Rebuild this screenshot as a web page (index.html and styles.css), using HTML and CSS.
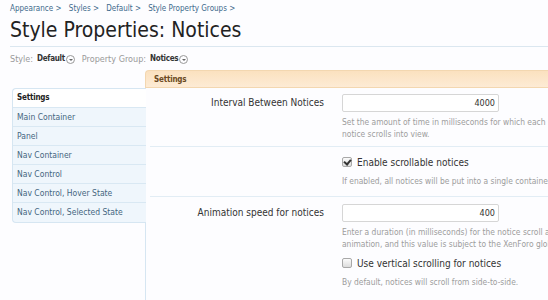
FILE: index.html
```html
<!DOCTYPE html>
<html lang="en">
<head>
  <meta charset="UTF-8">
  <title>Style Properties: Notices</title>
  <link rel="stylesheet" href="styles.css">
</head>
<body>

  <div class="page">
    <div class="breadcrumb">
      <a href="#">Appearance &gt;</a>
      <a href="#">Styles &gt;</a>
      <a href="#">Default &gt;</a>
      <a href="#">Style Property Groups &gt;</a>
    </div>

    <h1>Style Properties: Notices</h1>

    <div class="chooser">
      <span class="label">Style:</span> <b>Default</b><span class="drop"></span>
      <span class="label gap">Property Group:</span> <b>Notices</b><span class="drop"></span>
    </div>

    <div class="tabs">
      <div class="tab">Settings</div>
    </div>

    <div class="editor">
      <!-- Group list -->
      <ul class="groups">
        <li class="active">Settings</li>
        <li>Main Container</li>
        <li>Panel</li>
        <li>Nav Container</li>
        <li>Nav Control</li>
        <li>Nav Control, Hover State</li>
        <li>Nav Control, Selected State</li>
      </ul>

      <!-- Properties -->
      <div class="props">
        <div class="row">
          <label class="name">Interval Between Notices</label>
          <div class="ctrl">
            <input type="text" class="num" value="4000">
            <p class="hint">Set the amount of time in milliseconds for which each<br>notice scrolls into view.</p>
          </div>
        </div>

        <div class="row toggle">
          <div class="name"></div>
          <div class="ctrl">
            <label class="check"><input type="checkbox" checked> Enable scrollable notices</label>
            <p class="hint">If enabled, all notices will be put into a single container and scrolled.</p>
          </div>
        </div>

        <div class="row">
          <label class="name">Animation speed for notices</label>
          <div class="ctrl">
            <input type="text" class="num" value="400">
            <p class="hint">Enter a duration (in milliseconds) for the notice scroll and fade<br>animation, and this value is subject to the XenForo global speed multiplier.</p>
            <label class="check second"><input type="checkbox"> Use vertical scrolling for notices</label>
            <p class="hint">By default, notices will scroll from side-to-side.</p>
          </div>
        </div>
      </div>
    </div>
  </div>

</body>
</html>
```

FILE: styles.css
```css
* {
  margin: 0;
  padding: 0;
  box-sizing: border-box;
}

body {
  font-family: "DejaVu Sans Condensed", "DejaVu Sans", sans-serif;
  background-color: #fdfdff;
  color: #333;
  width: 548px;
  height: 300px;
  overflow: hidden;
}

.page {
  padding: 3px 0 0 10px;
}

.breadcrumb {
  font-size: 8px;
  height: 11px;
  line-height: 12px;
}

.breadcrumb a {
  color: #3d6a8c;
  text-decoration: none;
  margin-right: 5px;
}

h1 {
  font-weight: normal;
  font-size: 21px;
  color: #222;
  line-height: 26px;
  margin-top: 3px;
  padding-bottom: 3px;
  border-bottom: 1px solid #dbe7f0;
}

.chooser {
  font-size: 9px;
  color: #9a9a9a;
  margin-top: 6px;
  height: 12px;
  line-height: 12px;
  display: flex;
  align-items: center;
}

.chooser b {
  color: #333;
  font-size: 8px;
  letter-spacing: -0.3px;
  margin-left: 4px;
}

.chooser .gap {
  margin-left: 7px;
}

.drop {
  display: inline-block;
  width: 9px;
  height: 9px;
  border: 1px solid #999;
  border-radius: 50%;
  margin-left: 1px;
  position: relative;
}

.drop::after {
  content: "";
  position: absolute;
  left: 2px;
  top: 3px;
  border-left: 2px solid transparent;
  border-right: 2px solid transparent;
  border-top: 2px solid #666;
}

.tabs {
  margin-top: 5px;
  padding-left: 135px;
}

.tab {
  height: 18px;
  line-height: 17px;
  padding-left: 8px;
  font-size: 8px;
  font-weight: bold;
  letter-spacing: -0.2px;
  color: #6b4a22;
  background: linear-gradient(#fbe1bf, #fdebd5);
  border: 1px solid #f3d7b0;
  border-right: none;
  border-radius: 4px 0 0 0;
}

.editor {
  display: flex;
  align-items: flex-start;
}

.groups {
  list-style: none;
  flex-shrink: 0;
  width: 134px;
  margin-left: 2px;
  border: 1px solid #d6e6f2;
  border-right: none;
  border-radius: 4px 0 0 4px;
  background-color: #eff6fc;
  font-size: 8.5px;
  color: #456680;
  white-space: nowrap;
  position: relative;
  z-index: 1;
}

.groups li {
  height: 19px;
  line-height: 18px;
  padding-left: 4px;
  border-bottom: 1px solid #d9e8f3;
}

.groups li:last-child {
  border-bottom: none;
}

.groups li.active {
  background-color: #fff;
  color: #222;
  font-weight: bold;
  font-size: 8px;
  letter-spacing: -0.2px;
  border-radius: 4px 0 0 0;
}

.props {
  flex: 1;
  min-width: 0;
  height: 215px;
  border-left: 1px solid #d6e6f2;
  margin-left: -1px;
}

.row {
  display: grid;
  grid-template-columns: 174px 1fr;
  column-gap: 18px;
  margin-left: 4px;
  padding: 6px 0 6px;
  border-bottom: 1px solid #e2edf5;
  white-space: nowrap;
}

.row.toggle {
  padding-bottom: 9px;
}

.row:last-child {
  border-bottom: none;
  padding-top: 7px;
}

.name {
  text-align: right;
  font-size: 10px;
  color: #333;
  line-height: 18px;
}

.num {
  display: block;
  width: 157px;
  height: 18px;
  border: 1px solid #d6d6d6;
  border-radius: 2px;
  background-color: #fff;
  font-family: inherit;
  font-size: 9px;
  color: #333;
  text-align: right;
  padding-right: 3px;
}

.hint {
  font-size: 8.4px;
  color: #9c9c9c;
  line-height: 12px;
  margin-top: 4px;
}

.check {
  display: flex;
  align-items: center;
  font-size: 10px;
  color: #333;
  height: 18px;
}

.check input {
  appearance: none;
  width: 10px;
  height: 10px;
  margin-right: 5px;
  border: 1px solid #a8a8a8;
  border-radius: 2px;
  background: linear-gradient(#fbfbfb, #dcdcdc);
  position: relative;
}

.check input:checked::after {
  content: "";
  position: absolute;
  left: 2px;
  top: 0;
  width: 3px;
  height: 5px;
  border-right: 2px solid #333;
  border-bottom: 2px solid #333;
  transform: rotate(40deg);
}

.check.second {
  margin-top: 4px;
}
```
